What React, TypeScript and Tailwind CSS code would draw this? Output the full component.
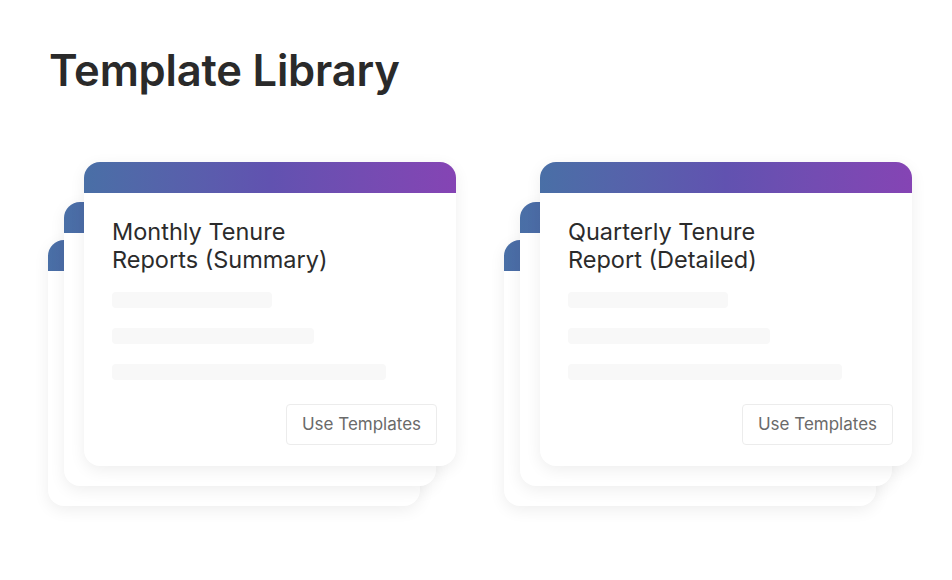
import React from "react";

type CardProps = { title?: string[]; className: string; front?: boolean };

function Card({ title, className, front }: CardProps) {
  return (
    <div
      className={
        "absolute w-[372px] rounded-[16px] bg-white overflow-hidden shadow-[0_4px_16px_rgba(0,0,0,0.07)] " +
        className
      }
    >
      <div className="h-[31px] bg-gradient-to-r from-[#496fa6] via-[#6152b0] to-[#8544b4]" />
      {front && title && (
        <div className="flex flex-col px-[28px] pt-[25px]">
          <div className="text-[23.5px] leading-[28px] text-[#2b2b2b] font-normal">
            {title.map((t) => (
              <div key={t}>{t}</div>
            ))}
          </div>
          <div className="mt-[18px] flex flex-col gap-[20px]">
            <div className="h-[16px] w-[160px] rounded-[4px] bg-[#f8f8f8]" />
            <div className="h-[16px] w-[202px] rounded-[4px] bg-[#f8f8f8]" />
            <div className="h-[16px] w-[274px] rounded-[4px] bg-[#f8f8f8]" />
          </div>
          <div className="mt-[24px] flex justify-end -mr-[9px]">
            <button className="h-[41px] w-[151px] rounded-[4px] border border-[#ececec] bg-white text-[17px] text-[#6a6a6a]">
              Use Templates
            </button>
          </div>
        </div>
      )}
    </div>
  );
}

function Stack({ title }: { title: string[] }) {
  return (
    <div className="relative w-[408px] h-[344px]">
      <Card className="left-0 top-[78px] h-[266px]" />
      <Card className="left-[16px] top-[40px] h-[284px]" />
      <Card className="left-[36px] top-0 h-[304px]" title={title} front />
    </div>
  );
}

export default function App() {
  return (
    <div
      className="w-[952px] h-[580px] bg-white overflow-hidden"
      style={{ fontFamily: "Inter, 'Noto Sans', sans-serif" }}
    >
      <h1 className="pl-[49px] pt-[42px] text-[43.5px] leading-[56px] font-semibold text-[#2a2a2a] tracking-[-0.2px]">
        Template Library
      </h1>
      <div className="flex gap-[48px] pl-[48px] pt-[64px]">
        <Stack title={["Monthly Tenure", "Reports (Summary)"]} />
        <Stack title={["Quarterly Tenure", "Report (Detailed)"]} />
      </div>
    </div>
  );
}
